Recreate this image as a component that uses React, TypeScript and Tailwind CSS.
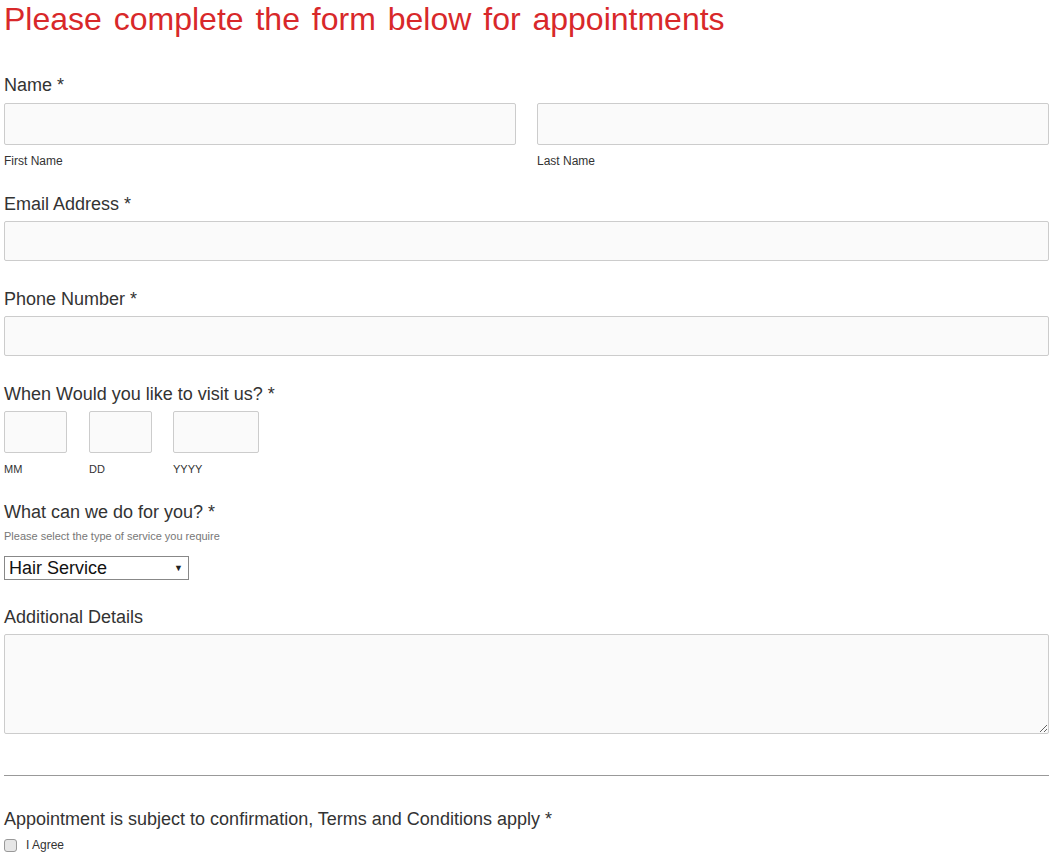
import React from 'react';

const label = 'block text-[18px] leading-[22px] text-[#333]';
const input = 'block rounded-[2px] border border-[#ccc] bg-[#fafafa]';
const sub = 'block text-[12px] leading-[14px] text-[#333]';
const tiny = 'mt-[10px] block text-[11px] leading-[13px] text-[#333]';

export default function App() {
  return (
    <div className="min-h-[863px] bg-white pl-[4px] pr-[8px] font-['Liberation_Sans',Arial,sans-serif]">
      <h1 className="pt-[1px] text-[32px] leading-[36px] text-[#d8282a] [word-spacing:3px]">
        Please complete the form below for appointments
      </h1>

      <div className="mt-[37px]">
        <label className={label}>Name *</label>
        <div className="mt-[7px] flex gap-[21px]">
          <div className="flex-1">
            <input className={`${input} h-[42px] w-full`} />
            <span className={`${sub} mt-[9px]`}>First Name</span>
          </div>
          <div className="flex-1">
            <input className={`${input} h-[42px] w-full`} />
            <span className={`${sub} mt-[9px]`}>Last Name</span>
          </div>
        </div>
      </div>

      <div className="mt-[25px]">
        <label className={label}>Email Address *</label>
        <input className={`${input} mt-[6px] h-[40px] w-full`} />
      </div>

      <div className="mt-[27px]">
        <label className={label}>Phone Number *</label>
        <input className={`${input} mt-[6px] h-[40px] w-full`} />
      </div>

      <div className="mt-[27px]">
        <label className={label}>When Would you like to visit us? *</label>
        <div className="mt-[6px] flex gap-[22px]">
          <div>
            <input className={`${input} h-[42px] w-[63px]`} />
            <span className={tiny}>MM</span>
          </div>
          <div>
            <input className={`${input} h-[42px] w-[63px]`} />
            <span className={tiny}>DD</span>
          </div>
          <div className="-ml-[1px]">
            <input className={`${input} h-[42px] w-[86px]`} />
            <span className={tiny}>YYYY</span>
          </div>
        </div>
      </div>

      <div className="mt-[25px]">
        <label className={label}>What can we do for you? *</label>
        <span className="mt-[7px] block text-[11px] leading-[13px] text-[#777]">
          Please select the type of service you require
        </span>
        <div className="relative mt-[13px] flex h-[24px] w-[185px] items-center border border-[#888] bg-white pl-[4px]">
          <span className="text-[18px] leading-[20px] text-[#111]">Hair Service</span>
          <span className="absolute right-[5px] top-[6px] text-[9px] leading-[10px] text-[#222]">▼</span>
        </div>
      </div>

      <div className="mt-[26px]">
        <label className={label}>Additional Details</label>
        <textarea className={`${input} mt-[6px] h-[100px] w-full resize-y`} />
      </div>

      <hr className="mt-[41px] border-t border-[#999]" />

      <div className="mt-[32px]">
        <label className={label}>Appointment is subject to confirmation, Terms and Conditions apply *</label>
        <div className="mt-[8px] flex items-center gap-[9px]">
          <input
            type="checkbox"
            className="h-[13px] w-[13px] appearance-none rounded-[3px] border border-[#999] bg-[#e6e6e6]"
          />
          <span className="text-[12px] leading-[14px] text-[#333]">I Agree</span>
        </div>
      </div>
    </div>
  );
}
